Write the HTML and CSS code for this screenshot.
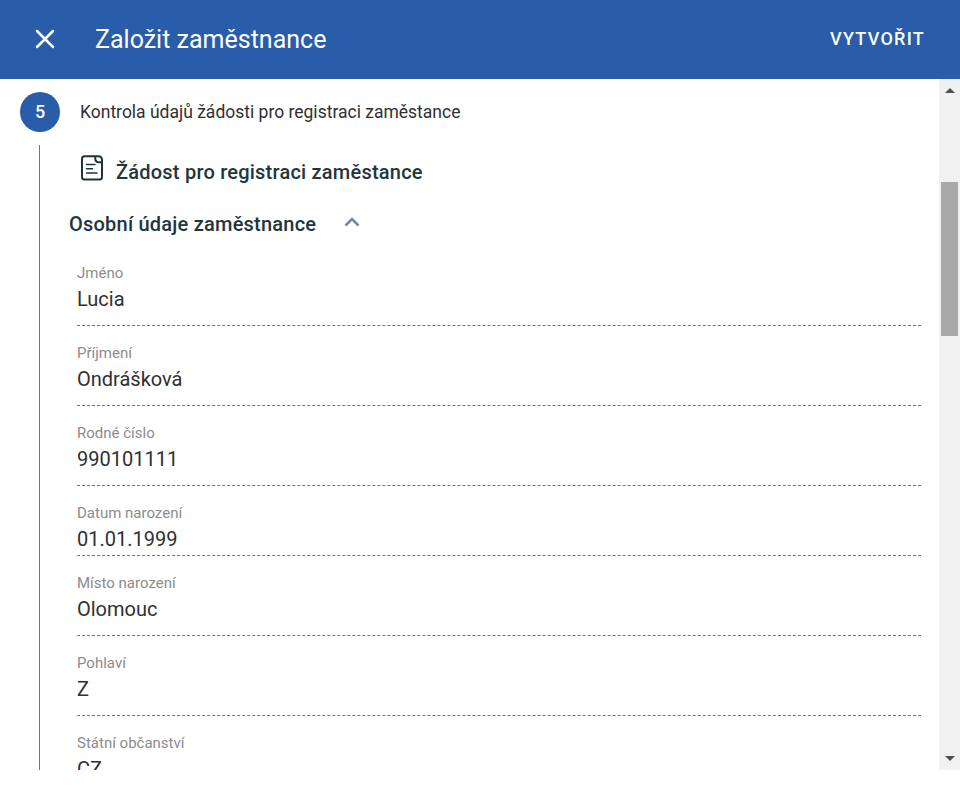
FILE: index.html
```html
<!DOCTYPE html>
<html lang="cs">
<head>
<meta charset="utf-8">
<title>Založit zaměstnance</title>
<link rel="stylesheet" href="styles.css">
</head>
<body>
<header class="toolbar">
  <svg class="close" viewBox="0 0 20 20"><path d="M2 2 18 18M18 2 2 18"/></svg>
  <h1>Založit zaměstnance</h1>
  <button class="create">VYTVOŘIT</button>
</header>
<div class="viewport">
  <main class="content">
    <div class="step"><span class="num">5</span><span class="step-label">Kontrola údajů žádosti pro registraci zaměstance</span></div>
    <section class="step-body">
      <div class="doc-title">
        <svg class="doc" viewBox="0 0 24 28"><path d="M4.500 2.300H18.300Q22 2.300 22 6V23Q22 25.500 19.500 25.500H4.500Q2 25.500 2 23V4.800Q2 2.300 4.500 2.300ZM15.300 2.500V4.500Q15.300 8.300 19 8.300H22"/><path class="lines" d="M6.500 10.500H15M6.500 14.700H12.500M6.500 19H17"/></svg>
        <h2>Žádost pro registraci zaměstance</h2>
      </div>
      <div class="group"><h3>Osobní údaje zaměstnance</h3><svg class="chev" viewBox="0 0 16 10"><path d="M1.500 8.500 8 2l6.500 6.500"/></svg></div>
      <dl>
        <div class="field"><dt>Jméno</dt><dd>Lucia</dd></div>
        <div class="field"><dt>Příjmení</dt><dd>Ondrášková</dd></div>
        <div class="field"><dt>Rodné číslo</dt><dd>990101111</dd></div>
        <div class="field short"><dt>Datum narození</dt><dd>01.01.1999</dd></div>
        <div class="field"><dt>Místo narození</dt><dd>Olomouc</dd></div>
        <div class="field"><dt>Pohlaví</dt><dd>Z</dd></div>
        <div class="field"><dt>Státní občanství</dt><dd>CZ</dd></div>
      </dl>
    </section>
  </main>
  <div class="scrollbar"><i class="up"></i><div class="thumb"></div><i class="down"></i></div>
</div>
</body>
</html>
```
FILE: styles.css
```css
* { box-sizing: border-box; }
body { margin: 0; height: 790px; overflow: hidden; background: #fff; font-family: Roboto, sans-serif; color: #303030; }
h1, h2, h3, dl, dt, dd { margin: 0; }
svg { fill: none; display: block; flex: none; }
.toolbar { height: 79px; background: #295ca9; color: #fff; display: flex; align-items: center; padding: 0 35px; }
.close { width: 20px; height: 20px; stroke: #fff; stroke-width: 2.5; stroke-linecap: round; margin-bottom: 1px; }
.toolbar h1 { font-size: 25px; font-weight: 400; margin: 1px 0 0 40px; line-height: 30px; }
.create { margin: 0 0 2px auto; border: 0; padding: 0; background: none; color: #fff; font: 500 18px/24px Roboto, sans-serif; letter-spacing: 1.25px; }
.viewport { height: 691px; display: flex; overflow: hidden; }
.content { flex: 1; height: 691px; overflow: hidden; }
.step { height: 66px; padding-left: 20px; display: flex; align-items: center; }
.num { width: 40px; height: 40px; padding-bottom: 1px; border-radius: 50%; background: #295ca9; color: #fff; display: grid; place-items: center; font-size: 18px; font-weight: 500; }
.step-label { margin-left: 20px; font-size: 17.500px; }
.step-body { margin-left: 39px; border-left: 1px solid #757575; height: 640px; padding-left: 29px; }
.doc-title { height: 54px; display: flex; align-items: center; padding-left: 11px; }
.doc { width: 24px; height: 28px; stroke: #1f333b; stroke-width: 2; margin-bottom: 8px; }
.lines { stroke-width: 1.5; stroke-linecap: round; }
h2, h3 { font-size: 20px; font-weight: 500; line-height: 24px; color: #22353d; letter-spacing: .22px; }
h2 { margin-left: 12px; }
.group { height: 50px; display: flex; align-items: center; }
.chev { width: 16px; height: 10px; margin: 0 0 4px 28px; stroke: #758a96; stroke-width: 2.6; }
dl { margin: -3px 18px 0 8px; }
.field { height: 80px; padding-top: 18px; border-bottom: 1px dashed #757575; }
.short { height: 70px; }
dt { font-size: 15px; line-height: 18px; color: #8c8c8c; }
dd { font-size: 20px; line-height: 24px; margin-top: 5px; }
.scrollbar { width: 21px; background: #f1f1f1; display: flex; flex-direction: column; align-items: center; padding: 9px 0; }
.up, .down { border: 5px solid transparent; }
.up { border-top: 0; border-bottom-color: #505050; }
.down { border-bottom: 0; border-top-color: #505050; margin-top: auto; }
.thumb { width: 17px; height: 154px; margin-top: 89px; background: #a8a8a8; }
```
